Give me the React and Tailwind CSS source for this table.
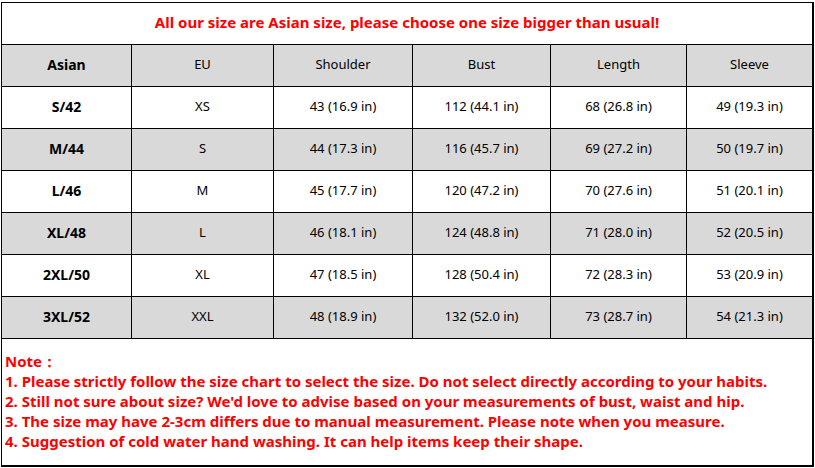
/**
 * Size chart (Asian sizes) with notes, Excel-sheet look.
 */

const rows = [
  ['S/42', 'XS', '43 (16.9 in)', '112 (44.1 in)', '68 (26.8 in)', '49 (19.3 in)'],
  ['M/44', 'S', '44 (17.3 in)', '116 (45.7 in)', '69 (27.2 in)', '50 (19.7 in)'],
  ['L/46', 'M', '45 (17.7 in)', '120 (47.2 in)', '70 (27.6 in)', '51 (20.1 in)'],
  ['XL/48', 'L', '46 (18.1 in)', '124 (48.8 in)', '71 (28.0 in)', '52 (20.5 in)'],
  ['2XL/50', 'XL', '47 (18.5 in)', '128 (50.4 in)', '72 (28.3 in)', '53 (20.9 in)'],
  ['3XL/52', 'XXL', '48 (18.9 in)', '132 (52.0 in)', '73 (28.7 in)', '54 (21.3 in)'],
]

const notes = [
  '1. Please strictly follow the size chart to select the size. Do not select directly according to your habits.',
  "2. Still not sure about size? We'd love to advise based on your measurements of bust, waist and hip.",
  '3. The size may have 2-3cm differs due to manual measurement. Please note when you measure.',
  '4. Suggestion of cold water hand washing. It can help items keep their shape.',
]

const cols = 'grid grid-cols-[130px_142px_139px_138px_136px_125px]'

function Row({ cells, gray }) {
  return (
    <div className={`${cols} h-[42px] border-b border-black ${gray ? 'bg-[#d9d9d9]' : 'bg-white'}`}>
      {cells.map((c, i) => (
        <div
          key={i}
          className={`flex items-center justify-center pb-[2px] text-[13px] text-black ${i < 5 ? 'border-r border-black' : ''} ${i === 0 ? 'font-bold text-[14px]' : ''}`}
        >
          {c}
        </div>
      ))}
    </div>
  )
}

export default function App() {
  return (
    <div className="w-[815px] h-[468px] bg-white pt-[2px] pl-[1px] font-['Noto_Sans',sans-serif]">
      <div className="w-[813px] border-t border-l border-black border-r-2 border-b-2">
        <div className="h-[42px] border-b border-black flex items-center justify-center pb-[2px] text-[15px] font-bold text-[#ff0000]">
          All our size are Asian size, please choose one size bigger than usual!
        </div>
        <Row gray cells={['Asian', 'EU', 'Shoulder', 'Bust', 'Length', 'Sleeve']} />
        {rows.map((r, i) => (
          <Row key={r[0]} gray={i % 2 === 1} cells={r} />
        ))}
        <div className="h-[126px] pt-[12px] pl-[3px] text-[15px] font-bold text-[#ff0000] leading-[20px]">
          <div>Note：</div>
          {notes.map(n => <div key={n}>{n}</div>)}
        </div>
      </div>
    </div>
  )
}
